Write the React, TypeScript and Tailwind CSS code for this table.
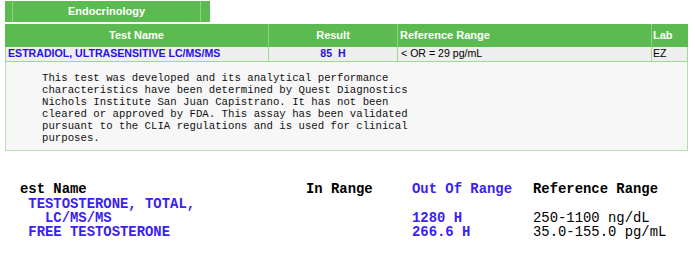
const sans = { fontFamily: "'Liberation Sans', Arial, sans-serif" };
const mono = { fontFamily: "'Liberation Mono', 'Courier New', monospace" };

const note = `This test was developed and its analytical performance
characteristics have been determined by Quest Diagnostics
Nichols Institute San Juan Capistrano. It has not been
cleared or approved by FDA. This assay has been validated
pursuant to the CLIA regulations and is used for clinical
purposes.`;

const App = () => {
  return (
    <div className="h-[280px] w-[695px] overflow-hidden bg-white" style={sans}>
      {/* Section tab */}
      <div className="ml-[5px] mt-[1px] flex h-[21px] w-[205px] bg-[#5cbb50]">
        <div className="ml-[7px] flex h-full w-[189px] items-center justify-center border-x border-[#8fd184] text-[11px] font-bold text-white">
          Endocrinology
        </div>
      </div>

      {/* Results table */}
      <div className="ml-[5px] mt-[2px] w-[683px] text-[11px]">
        <div className="flex h-[23px] bg-[#5cbb50] font-bold text-white">
          <div className="flex w-[264px] items-center justify-center border-r border-[#8fd184]">Test Name</div>
          <div className="flex w-[129px] items-center justify-center border-r border-[#8fd184]">Result</div>
          <div className="flex w-[254px] items-center border-r border-[#8fd184] pl-[2px]">Reference Range</div>
          <div className="flex flex-1 items-center pl-[1px]">Lab</div>
        </div>
        <div className="flex h-[15px] border-x border-b border-[#9fd795] bg-[#eeeeee] text-[10.6px] leading-[13px]">
          <div className="w-[263px] border-r border-[#9fd795] pl-[2px] font-bold text-[#2a10e6]">
            ESTRADIOL, ULTRASENSITIVE LC/MS/MS
          </div>
          <div className="w-[129px] border-r border-[#9fd795] text-center font-bold text-[#2a10e6]">
            85&nbsp; H
          </div>
          <div className="w-[254px] border-r border-[#9fd795] pl-[3px] text-black">&lt; OR = 29 pg/mL</div>
          <div className="flex-1 pl-[1px] text-black">EZ</div>
        </div>
        <div className="h-[89px] border-x border-b border-[#b5e0ad] bg-[#f7f7f7] pl-[36px] pt-[10px]">
          <pre className="text-[10.7px] leading-[12px] text-[#111]" style={mono}>
            {note}
          </pre>
        </div>
      </div>

      {/* Second report block */}
      <div className="ml-[20px] mt-[31px] text-[13.9px] font-bold leading-[14px]" style={mono}>
        <div className="flex text-black">
          <div className="w-[286px]">est Name</div>
          <div className="w-[106px]">In Range</div>
          <div className="w-[121px] text-[#3a1ef2]">Out Of Range</div>
          <div>Reference Range</div>
        </div>
        <div className="mt-[1px] flex">
          <div className="w-[286px] whitespace-pre text-[#3a1ef2]">{" TESTOSTERONE, TOTAL,\n   LC/MS/MS"}</div>
          <div className="w-[106px]" />
          <div className="w-[121px] whitespace-pre text-[#3a1ef2]">{"\n1280 H"}</div>
          <div className="whitespace-pre font-normal text-black">{"\n250-1100 ng/dL"}</div>
        </div>
        <div className="flex">
          <div className="w-[286px] whitespace-pre text-[#3a1ef2]">{" FREE TESTOSTERONE"}</div>
          <div className="w-[106px]" />
          <div className="w-[121px] text-[#3a1ef2]">266.6 H</div>
          <div className="font-normal text-black">35.0-155.0 pg/mL</div>
        </div>
      </div>
    </div>
  );
};

export default App;
